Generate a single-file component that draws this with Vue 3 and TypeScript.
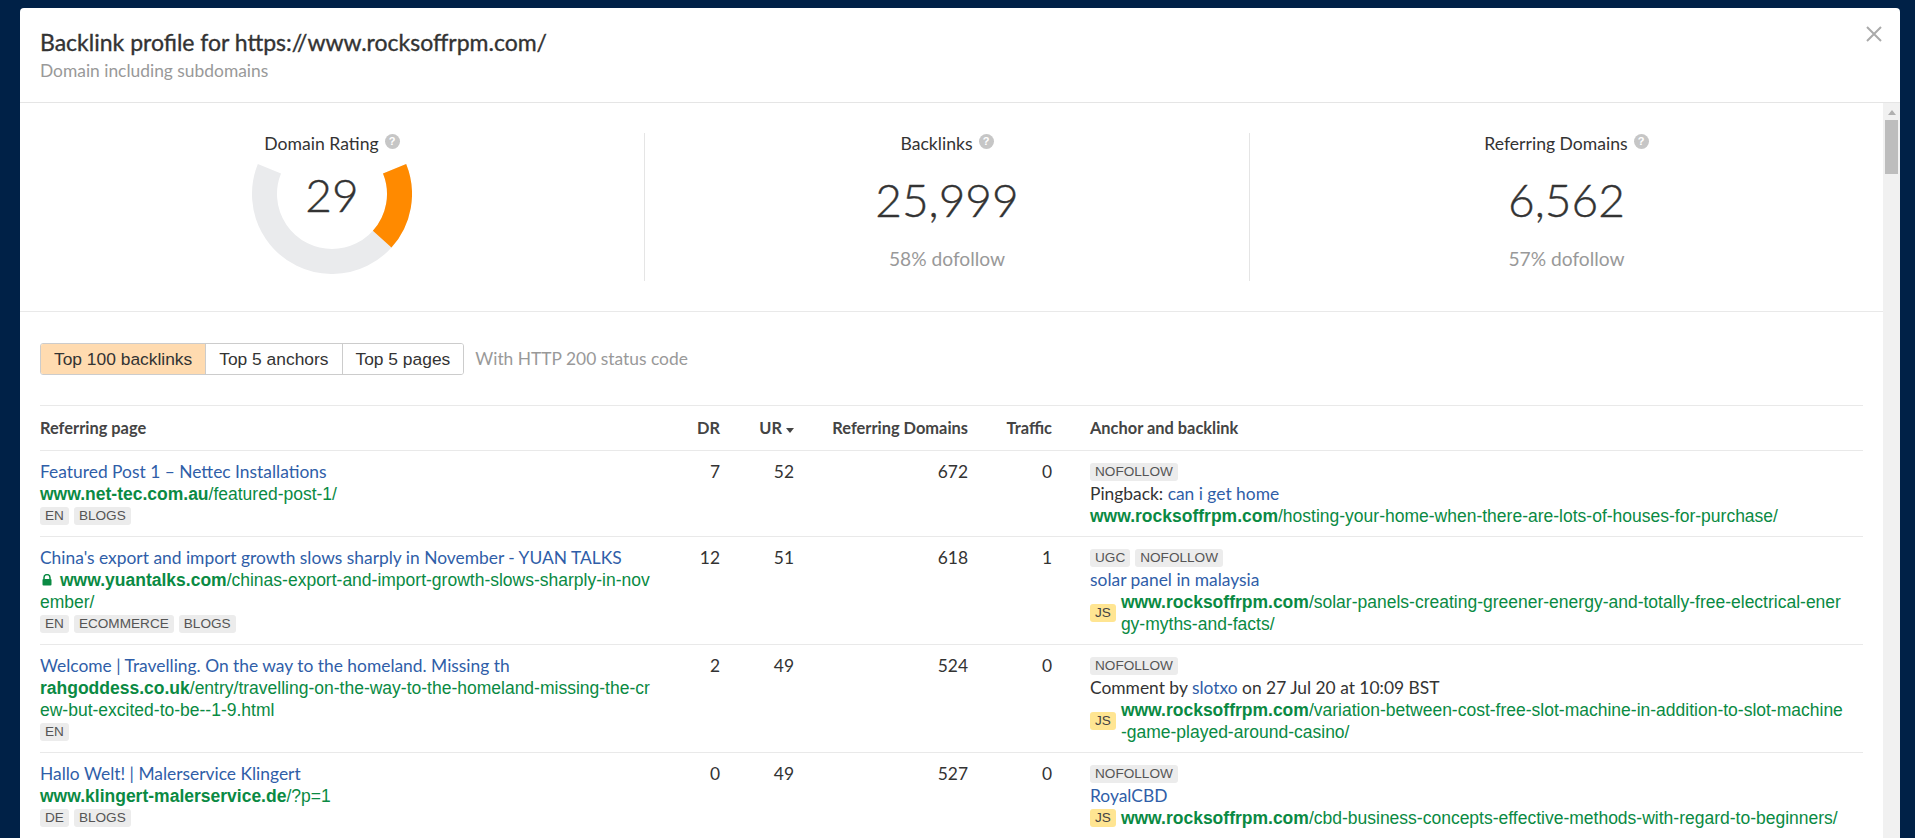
<template>
  <div class="modal">
    <header class="modal-head">
      <h1 class="modal-title">Backlink profile for https://www.rocksoffrpm.com/</h1>
      <div class="modal-sub">Domain including subdomains</div>
      <svg class="close" width="16" height="16" viewBox="0 0 16 16">
        <path d="M1 1 L15 15 M15 1 L1 15" stroke="#aaa" stroke-width="2" fill="none" />
      </svg>
    </header>

    <div class="modal-body">
      <div class="content">
        <section class="stats">
          <div class="stat">
            <div class="stat-label">Domain Rating <span class="help">?</span></div>
            <div class="gauge">
              <svg width="160" height="110" viewBox="-80 -30 160 110">
                <path :d="arc(-22, 202)" class="gauge-bg" />
                <path :d="arc(-22, 42)" class="gauge-val" />
              </svg>
              <div class="gauge-num">29</div>
            </div>
          </div>
          <div class="stat stat-line">
            <div class="stat-label">Backlinks <span class="help">?</span></div>
            <div class="stat-value">25,999</div>
            <div class="stat-note">58% dofollow</div>
          </div>
          <div class="stat stat-line">
            <div class="stat-label">Referring Domains <span class="help">?</span></div>
            <div class="stat-value">6,562</div>
            <div class="stat-note">57% dofollow</div>
          </div>
        </section>

        <section class="list">
          <div class="toolbar">
            <div class="tabs">
              <button class="tab active">Top 100 backlinks</button>
              <button class="tab">Top 5 anchors</button>
              <button class="tab">Top 5 pages</button>
            </div>
            <span class="toolbar-note">With HTTP 200 status code</span>
          </div>

          <div class="row row-head">
            <div>Referring page</div>
            <div class="num">DR</div>
            <div class="num">UR <i class="caret"></i></div>
            <div class="num">Referring Domains</div>
            <div class="num">Traffic</div>
            <div class="anchor">Anchor and backlink</div>
          </div>

          <div v-for="r in rows" :key="r.title" class="row">
            <div class="page">
              <a class="link">{{ r.title }}</a>
              <div class="url">
                <svg v-if="r.secure" class="lock" width="10" height="12" viewBox="0 0 10 12">
                  <path d="M2 5.5V3.6a3 3 0 0 1 6 0V5.5" fill="none" stroke="#0a8a43" stroke-width="1.5" />
                  <rect x="0.5" y="5" width="9" height="6.5" rx="1" fill="#0a8a43" />
                </svg>
                <b>{{ r.host }}</b>{{ r.path }}
              </div>
              <div class="tags">
                <span v-for="t in r.tags" :key="t" class="tag">{{ t }}</span>
              </div>
            </div>
            <div class="num">{{ r.dr }}</div>
            <div class="num">{{ r.ur }}</div>
            <div class="num">{{ r.domains }}</div>
            <div class="num">{{ r.traffic }}</div>
            <div class="anchor">
              <div class="tags">
                <span v-for="t in r.flags" :key="t" class="tag">{{ t }}</span>
              </div>
              <div class="anchor-text">{{ r.before }}<a class="link">{{ r.anchor }}</a>{{ r.after }}</div>
              <div class="backlink">
                <span v-if="r.js" class="tag js">JS</span>
                <div class="url"><b>www.rocksoffrpm.com</b>{{ r.target }}</div>
              </div>
            </div>
          </div>
        </section>
      </div>

      <div class="scrollbar">
        <i class="scroll-up"></i>
        <div class="scroll-thumb"></div>
      </div>
    </div>
  </div>
</template>

<script setup lang="ts">
interface Row {
  title: string;
  secure?: boolean;
  host: string;
  path: string;
  tags: string[];
  dr: number;
  ur: number;
  domains: number;
  traffic: number;
  flags: string[];
  before?: string;
  anchor: string;
  after?: string;
  js?: boolean;
  target: string;
}

const rows: Row[] = [
  {
    title: 'Featured Post 1 – Nettec Installations',
    host: 'www.net-tec.com.au',
    path: '/featured-post-1/',
    tags: ['EN', 'BLOGS'],
    dr: 7,
    ur: 52,
    domains: 672,
    traffic: 0,
    flags: ['NOFOLLOW'],
    before: 'Pingback: ',
    anchor: 'can i get home',
    target: '/hosting-your-home-when-there-are-lots-of-houses-for-purchase/',
  },
  {
    title: "China's export and import growth slows sharply in November - YUAN TALKS",
    secure: true,
    host: 'www.yuantalks.com',
    path: '/chinas-export-and-import-growth-slows-sharply-in-november/',
    tags: ['EN', 'ECOMMERCE', 'BLOGS'],
    dr: 12,
    ur: 51,
    domains: 618,
    traffic: 1,
    flags: ['UGC', 'NOFOLLOW'],
    anchor: 'solar panel in malaysia',
    js: true,
    target: '/solar-panels-creating-greener-energy-and-totally-free-electrical-energy-myths-and-facts/',
  },
  {
    title: 'Welcome | Travelling. On the way to the homeland. Missing th',
    host: 'rahgoddess.co.uk',
    path: '/entry/travelling-on-the-way-to-the-homeland-missing-the-crew-but-excited-to-be--1-9.html',
    tags: ['EN'],
    dr: 2,
    ur: 49,
    domains: 524,
    traffic: 0,
    flags: ['NOFOLLOW'],
    before: 'Comment by ',
    anchor: 'slotxo',
    after: ' on 27 Jul 20 at 10:09 BST',
    js: true,
    target: '/variation-between-cost-free-slot-machine-in-addition-to-slot-machine-game-played-around-casino/',
  },
  {
    title: 'Hallo Welt! | Malerservice Klingert',
    host: 'www.klingert-malerservice.de',
    path: '/?p=1',
    tags: ['DE', 'BLOGS'],
    dr: 0,
    ur: 49,
    domains: 527,
    traffic: 0,
    flags: ['NOFOLLOW'],
    anchor: 'RoyalCBD',
    js: true,
    target: '/cbd-business-concepts-effective-methods-with-regard-to-beginners/',
  },
];

// gauge ring segment, clockwise between two angles (degrees, 0 = east, y down)
function arc(from: number, to: number): string {
  const r = 67.5;
  const pt = (a: number) => {
    const rad = (a * Math.PI) / 180;
    return `${(r * Math.cos(rad)).toFixed(2)} ${(r * Math.sin(rad)).toFixed(2)}`;
  };
  return `M${pt(from)} A${r} ${r} 0 ${to - from > 180 ? 1 : 0} 1 ${pt(to)}`;
}
</script>

<style>
html,
body {
  margin: 0;
  height: 100%;
  overflow: hidden;
  background: #002147;
}
</style>

<style scoped>
.modal {
  margin: 8px 15px 0 20px;
  height: 830px;
  background: #fff;
  border-radius: 4px 4px 0 0;
  display: flex;
  flex-direction: column;
  overflow: hidden;
  font-family: Lato, "Liberation Sans", sans-serif;
  font-size: 17.4px;
  line-height: 22px;
  color: #333;
}

.modal-head {
  position: relative;
  height: 95px;
  box-sizing: border-box;
  padding: 20px 20px 0;
  border-bottom: 1px solid #e5e5e5;
  flex-shrink: 0;
}

.modal-title {
  margin: 0;
  font-size: 23px;
  line-height: 28px;
  font-weight: 400;
  -webkit-text-stroke: 0.35px #333;
  color: #333;
}

.modal-sub {
  margin-top: 5px;
  font-size: 17.4px;
  line-height: 20px;
  color: #999;
}

.close {
  position: absolute;
  top: 18px;
  right: 18px;
}

.modal-body {
  flex: 1;
  display: flex;
  min-height: 0;
}

.content {
  flex: 1;
  min-width: 0;
  overflow: hidden;
}

.stats {
  display: grid;
  grid-template-columns: 624px 605px 1fr;
  padding: 30px 0;
  border-bottom: 1px solid #e9e9e9;
  height: 209px;
  box-sizing: border-box;
}

.stat {
  display: flex;
  flex-direction: column;
  align-items: center;
  height: 148px;
}

.stat-line {
  border-left: 1px solid #e5e5e5;
}

.stat-label {
  display: flex;
  align-items: center;
  gap: 6px;
  font-size: 17.6px;
  color: #333;
}

.help {
  width: 15px;
  height: 15px;
  margin-bottom: 5px;
  border-radius: 50%;
  background: #c6c6c6;
  color: #fff;
  font: bold 11px/15px "Liberation Sans", sans-serif;
  text-align: center;
}

.stat-value {
  margin-top: 20px;
  font-size: 46px;
  line-height: 50px;
  font-weight: 300;
  -webkit-text-stroke: 0.4px #333;
  color: #333;
}

.stat-note {
  margin-top: 23px;
  font-size: 19.2px;
  color: #999;
}

.gauge {
  position: relative;
  width: 160px;
  height: 110px;
  margin-top: 9px;
}

.gauge svg {
  display: block;
}

.gauge-bg,
.gauge-val {
  fill: none;
  stroke-width: 25;
}

.gauge-bg {
  stroke: #eaebed;
}

.gauge-val {
  stroke: #ff8a00;
}

.gauge-num {
  position: absolute;
  top: 6px;
  left: 0;
  right: 0;
  text-align: center;
  font-size: 46px;
  line-height: 50px;
  font-weight: 300;
  -webkit-text-stroke: 0.4px #333;
}

.list {
  padding: 0 20px;
}

.toolbar {
  display: flex;
  align-items: center;
  height: 93px;
  box-sizing: border-box;
}

.tabs {
  display: flex;
  height: 32px;
  box-sizing: border-box;
  border: 1px solid #ccc;
  border-radius: 3px;
  overflow: hidden;
}

.tab {
  padding: 0 13px;
  border: 0;
  border-left: 1px solid #ccc;
  background: #fff;
  font: 17.4px/30px "Liberation Sans", sans-serif;
  color: #333;
}

.tab:first-child {
  border-left: 0;
}

.tab.active {
  background: #ffdbb0;
}

.toolbar-note {
  margin-left: 11px;
  color: #999;
}

.row {
  display: grid;
  grid-template-columns: 640px 40px 74px 174px 84px 1fr;
  padding: 10px 0 9px;
  border-top: 1px solid #e9e9e9;
  box-sizing: border-box;
}

.row-head {
  height: 45px;
  padding: 11px 0 0;
  font-size: 16.4px;
  font-weight: 700;
  color: #444;
}

.num {
  text-align: right;
}

.caret {
  display: inline-block;
  width: 0;
  height: 0;
  margin-bottom: 1px;
  border-left: 4.5px solid transparent;
  border-right: 4.5px solid transparent;
  border-top: 5px solid #444;
}

.page {
  padding-right: 30px;
}

.anchor {
  padding-left: 38px;
  padding-right: 18px;
}

.link {
  color: #2f5ea8;
}

.url {
  font-family: "Liberation Sans", sans-serif;
  font-size: 17.5px;
  color: #0a8a43;
  word-break: break-all;
}

.lock {
  margin: 0 8px 0 2px;
}

.tags {
  display: flex;
  align-items: center;
  gap: 5px;
  height: 22px;
}

.tag {
  display: inline-block;
  height: 18px;
  padding: 0 5px;
  border-radius: 3px;
  background: #ececec;
  color: #555;
  font: 13.6px/18px "Liberation Sans", sans-serif;
}

.tag.js {
  flex-shrink: 0;
  background: #ffe592;
  color: #444;
}

.backlink {
  display: flex;
  align-items: center;
  gap: 5px;
}

.scrollbar {
  position: relative;
  width: 17px;
  background: #f1f1f1;
  flex-shrink: 0;
}

.scroll-up {
  position: absolute;
  top: 7px;
  left: 5px;
  width: 0;
  height: 0;
  border-left: 4px solid transparent;
  border-right: 4px solid transparent;
  border-bottom: 5px solid #b0b0b0;
}

.scroll-thumb {
  margin: 17px 2px 0;
  height: 54px;
  background: #bdbdbd;
}
</style>
